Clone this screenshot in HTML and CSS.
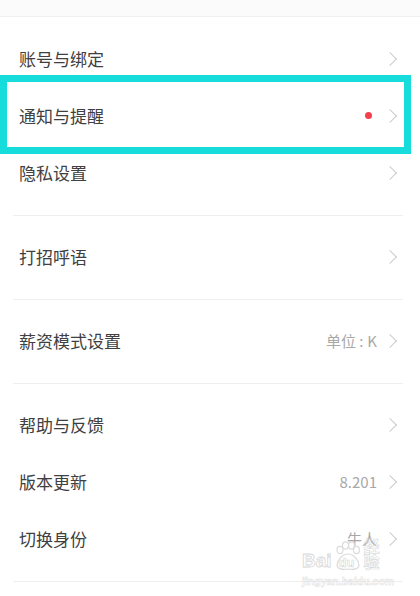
FILE: index.html
```html
<!DOCTYPE html>
<html lang="zh-CN">
<head>
  <meta charset="UTF-8">
  <title>设置</title>
  <link rel="stylesheet" href="styles.css">
</head>
<body>
  <div class="top-bar"></div>

  <!-- Account group -->
  <section class="group group-first">
    <div class="row">
      <span class="label">账号与绑定</span>
      <span class="chevron"></span>
    </div>
    <div class="row row-marked">
      <span class="label">通知与提醒</span>
      <span class="dot"></span>
      <span class="chevron"></span>
      <div class="highlight"></div>
    </div>
    <div class="row">
      <span class="label">隐私设置</span>
      <span class="chevron"></span>
    </div>
  </section>

  <section class="group">
    <div class="row">
      <span class="label">打招呼语</span>
      <span class="chevron"></span>
    </div>
  </section>

  <section class="group">
    <div class="row">
      <span class="label">薪资模式设置</span>
      <span class="value">单位<span class="colon">:</span>K</span>
      <span class="chevron"></span>
    </div>
  </section>

  <section class="group">
    <div class="row">
      <span class="label">帮助与反馈</span>
      <span class="chevron"></span>
    </div>
    <div class="row">
      <span class="label">版本更新</span>
      <span class="value">8.201</span>
      <span class="chevron"></span>
    </div>
    <div class="row">
      <span class="label">切换身份</span>
      <span class="value">牛人</span>
      <span class="chevron"></span>
    </div>
  </section>

  <!-- watermark -->
  <div class="watermark">
    <div class="wm-logo">
      <span class="wm-bai">Bai</span>
      <span class="wm-paw">
        <svg width="28" height="30" viewBox="0 0 28 30">
          <g fill="none" stroke="#dcdcdc" stroke-width="1.2">
            <ellipse cx="6" cy="9" rx="3" ry="3.6"/>
            <ellipse cx="11.5" cy="4.5" rx="3" ry="3.6"/>
            <ellipse cx="17.5" cy="4.5" rx="3" ry="3.6"/>
            <ellipse cx="22.5" cy="9" rx="3" ry="3.6"/>
            <path d="M14 13 C8 13 3 20 3 24 C3 28 8 29 14 28 C20 29 25 28 25 24 C25 20 20 13 14 13 Z"/>
          </g>
        </svg>
        <span class="wm-du">du</span>
      </span>
      <span class="wm-jy">经验</span>
    </div>
    <div class="wm-url">jingyan.baidu.com</div>
  </div>
</body>
</html>
```

FILE: styles.css
```css
body {
  margin: 0;
  background: #fff;
  font-family: "Noto Sans CJK SC", "Noto Sans", sans-serif;
  color: #404040;
  position: relative;
  height: 596px;
  overflow: hidden;
}
.top-bar {
  height: 16px;
  background: #fbfbfb;
  border-bottom: 1px solid #f0f0f0;
}
.group {
  margin: 0 17px 0 13px;
  padding: 12px 0 14px;
  border-bottom: 1px solid #efefef;
}
.group-first {
  padding-top: 13px;
}
.row {
  position: relative;
  height: 57px;
  display: flex;
  align-items: center;
  padding: 0 5px 0 6px;
}
.label {
  flex: 1;
  font-size: 17px;
  line-height: 1;
  color: #404040;
}
.value {
  font-size: 15px;
  line-height: 1;
  color: #a8a8a8;
  margin-right: 12px;
}
.colon {
  margin: 0 4px 0 3px;
}
.dot {
  width: 7px;
  height: 7px;
  border-radius: 50%;
  background: #f2414c;
  margin-right: 17px;
}
.chevron {
  width: 9px;
  height: 14px;
  position: relative;
}
.chevron::before {
  content: "";
  position: absolute;
  width: 9px;
  height: 9px;
  border-top: 1.3px solid #cbcbcb;
  border-right: 1.3px solid #cbcbcb;
  transform: rotate(45deg);
  left: -4px;
  top: 2px;
}
/* annotation frame over the notification row */
.highlight {
  position: absolute;
  left: -13px;
  right: -8px;
  top: -12px;
  bottom: -10px;
  border: 7px solid #16dcdc;
}
.watermark {
  position: absolute;
  left: 302px;
  top: 541px;
  width: 92px;
  color: transparent;
}
.wm-logo {
  display: flex;
  align-items: flex-end;
  height: 30px;
}
.wm-bai {
  font-family: "Liberation Sans", sans-serif;
  font-size: 19px;
  font-weight: bold;
  line-height: 1;
  -webkit-text-stroke: 0.8px #d8d8d8;
  margin-bottom: 1px;
}
.wm-paw {
  position: relative;
  width: 28px;
  height: 30px;
  margin: 0 2px;
}
.wm-paw svg {
  display: block;
}
.wm-du {
  position: absolute;
  left: 5px;
  top: 15px;
  font-family: "Liberation Sans", sans-serif;
  font-size: 13px;
  font-weight: bold;
  line-height: 1;
  -webkit-text-stroke: 0.6px #d8d8d8;
}
.wm-jy {
  font-size: 16px;
  font-weight: bold;
  line-height: 1;
  -webkit-text-stroke: 0.6px #d8d8d8;
  margin-bottom: 2px;
}
.wm-url {
  font-family: "Liberation Sans", sans-serif;
  font-size: 10.5px;
  font-weight: bold;
  line-height: 1;
  margin-top: 5px;
  -webkit-text-stroke: 0.5px #e0e0e0;
}
```
